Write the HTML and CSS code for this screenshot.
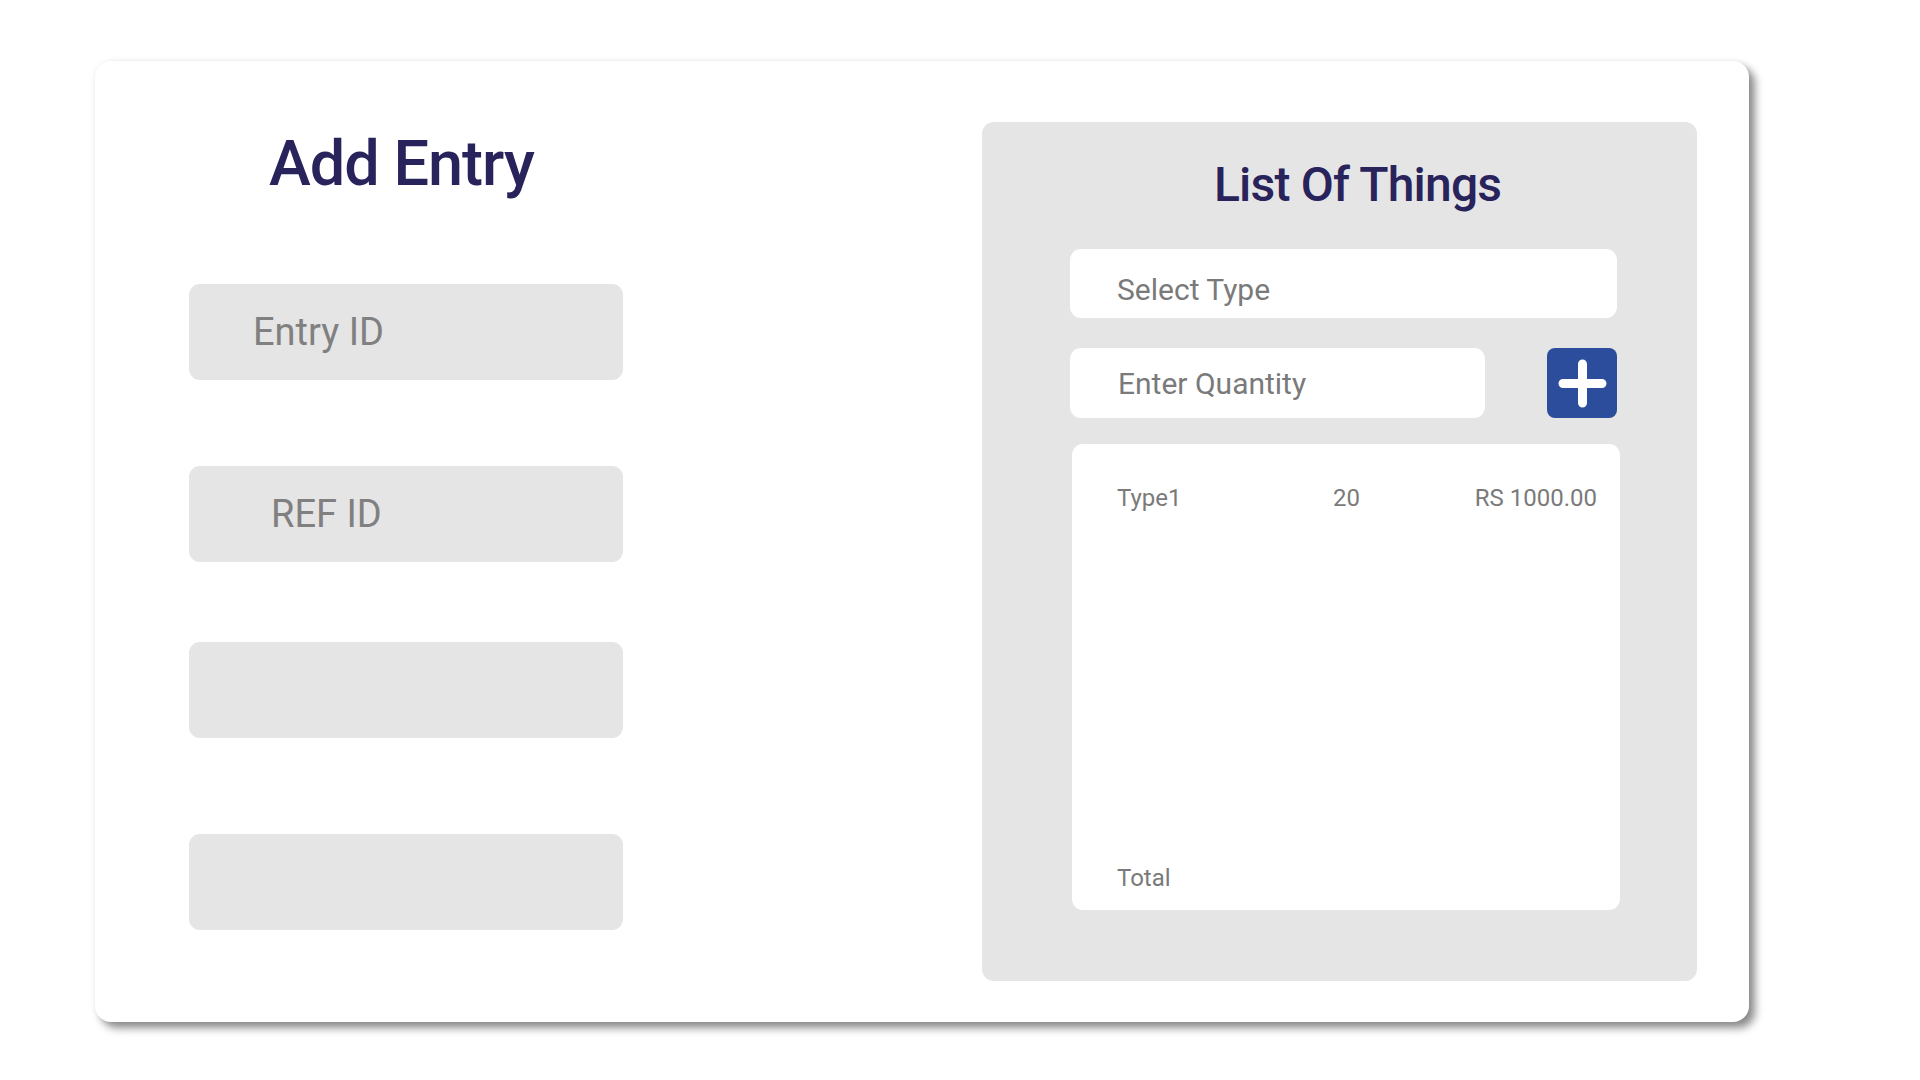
FILE: index.html
```html
<!DOCTYPE html>
<html lang="en">
<head>
<meta charset="utf-8">
<title>Add Entry</title>
<link rel="stylesheet" href="styles.css">
</head>
<body>
  <div class="card">
    <section class="entry">
      <h1 class="entry-title">Add Entry</h1>
      <div class="field field-1"><span class="ph">Entry ID</span></div>
      <div class="field field-2"><span class="ph ph-ref">REF ID</span></div>
      <div class="field field-3"></div>
      <div class="field field-4"></div>
    </section>
    <section class="panel">
      <h2 class="panel-title">List Of Things</h2>
      <div class="select">Select Type</div>
      <div class="qty-row">
        <div class="qty">Enter Quantity</div>
        <div class="add-btn">
          <svg width="70" height="70" viewBox="0 0 70 70">
            <rect x="0" y="0" width="70" height="70" rx="8" fill="#2c4c9c"/>
            <path d="M35.5 16 V55 M16 35.5 H55" stroke="#fff" stroke-width="9" stroke-linecap="round" fill="none"/>
          </svg>
        </div>
      </div>
      <div class="list">
        <div class="row">
          <span class="c-type">Type1</span>
          <span class="c-qty">20</span>
          <span class="c-price">RS 1000.00</span>
        </div>
        <div class="total">Total</div>
      </div>
    </section>
  </div>
</body>
</html>
```
FILE: styles.css
```css
html, body {
  margin: 0;
  padding: 0;
  background: #ffffff;
}
body {
  font-family: Roboto, "Liberation Sans", sans-serif;
  padding: 61px 0 0 95px;
  min-height: 1080px;
  box-sizing: border-box;
}
.card {
  width: 1654px;
  height: 961px;
  background: #ffffff;
  border-radius: 16px;
  box-shadow: 0 0 6px rgba(0,0,0,0.06), 6px 6px 8px rgba(0,0,0,0.45);
  display: flex;
  box-sizing: border-box;
}
.entry {
  flex: 1;
  padding: 66px 0 0 94px;
  display: flex;
  flex-direction: column;
}
.entry-title {
  margin: 0 0 0 80px;
  font-size: 63px;
  line-height: 74px;
  font-weight: 500;
  letter-spacing: -1px;
  color: #29235c;
}
.field {
  width: 434px;
  height: 96px;
  background: #e5e5e5;
  border-radius: 11px;
  display: flex;
  align-items: center;
  padding-left: 64px;
  box-sizing: border-box;
}
.field-1 { margin-top: 83px; }
.field-2 { margin-top: 86px; padding-left: 82px; }
.field-3 { margin-top: 80px; }
.field-4 { margin-top: 96px; }
.ph {
  font-size: 38px;
  color: #808080;
}
.panel {
  width: 715px;
  height: 859px;
  margin: 61px 52px 0 0;
  background: #e5e5e5;
  border-radius: 12px;
  box-sizing: border-box;
  padding: 35px 0 0 88px;
  display: flex;
  flex-direction: column;
}
.panel-title {
  margin: 0 0 0 144px;
  font-size: 48px;
  line-height: 56px;
  font-weight: 500;
  letter-spacing: -0.8px;
  color: #29235c;
}
.select {
  margin-top: 36px;
  width: 547px;
  height: 69px;
  background: #ffffff;
  border-radius: 11px;
  box-sizing: border-box;
  padding: 11px 0 0 47px;
  display: flex;
  align-items: center;
  font-size: 30px;
  color: #7a7a7a;
}
.qty-row {
  margin-top: 30px;
  width: 547px;
  display: flex;
  justify-content: space-between;
}
.qty {
  width: 415px;
  height: 70px;
  background: #ffffff;
  border-radius: 11px;
  box-sizing: border-box;
  padding-left: 48px;
  display: flex;
  align-items: center;
  font-size: 30px;
  color: #7a7a7a;
}
.add-btn {
  width: 70px;
  height: 70px;
}
.add-btn svg {
  display: block;
}
.list {
  margin: 26px 0 0 2px;
  width: 548px;
  height: 466px;
  background: #ffffff;
  border-radius: 11px;
  box-sizing: border-box;
  padding: 40px 23px 18px 45px;
  display: flex;
  flex-direction: column;
  justify-content: space-between;
  font-size: 24px;
  line-height: 28px;
  color: #7a7a7a;
}
.row {
  display: flex;
}
.c-type {
  width: 216px;
}
.c-price {
  margin-left: auto;
}
```
